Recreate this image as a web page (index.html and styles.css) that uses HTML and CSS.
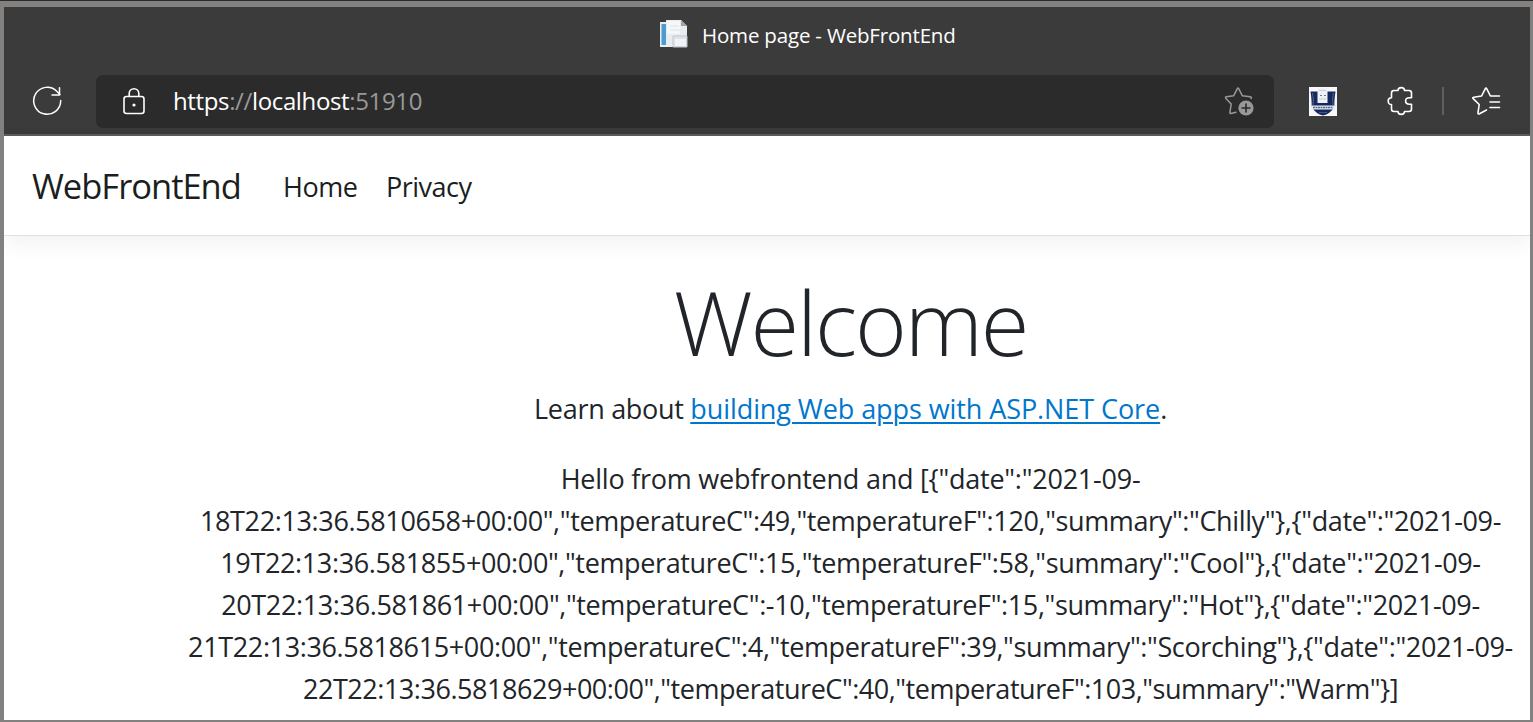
FILE: index.html
```
<!DOCTYPE html>
<html lang="en">
<head>
<meta charset="utf-8">
<title>Home page - WebFrontEnd</title>
<link rel="stylesheet" href="styles.css">
</head>
<body>
<div class="window">
  <div class="chrome">
    <div class="titlebar">
      <svg class="favicon" width="28" height="28" viewBox="0 0 28 28">
        <path d="M0 2H8V27H0z" fill="#e8edf2"/><path d="M1.5 4H6V25H1.5z" fill="#4e9bd0"/>
        <path d="M6 0H21L27 6V27H6z" fill="#e9edf0"/><path d="M7 1H20V14H7z" fill="#f5f7f8"/>
        <path d="M21 0V6H27z" fill="#9ca3a8"/><path d="M10 6H19M10 10H22" stroke="#dfe4e8"/>
        <path d="M13 16H27V27H13z" fill="#dfe5eb" stroke="#bfc7ce"/><path d="M15 19H26V26H15z" fill="#f1f4f7"/>
      </svg>
      <span class="tab-title">Home page - WebFrontEnd</span>
    </div>
    <div class="toolbar">
      <svg class="reload" width="32" height="32" viewBox="0 0 32 32" fill="none" stroke="#fff" stroke-width="1.500" stroke-linecap="round" stroke-linejoin="round">
        <path d="M28.700 15.500A13.500 13.500 0 1 1 25 6.500L28 9.500M27.500 2.700V10H20"/>
      </svg>
      <div class="address">
        <svg class="lock" width="24" height="30" viewBox="0 0 24 30" fill="none" stroke="#fff" stroke-width="1.600">
          <rect x="2" y="10.500" width="20" height="17" rx="2.500"/><path d="M7.200 10V7.500a4.800 4.800 0 0 1 9.600 0V10"/><circle cx="12" cy="19" r="1.600" fill="#fff" stroke="none"/>
        </svg>
        <span class="url"><span class="strong">https</span>://<span class="strong">localhost</span>:51910</span>
        <svg class="add-star" width="31" height="31" viewBox="0 0 31 31" fill="none" stroke="#999" stroke-width="1.500" stroke-linejoin="round" stroke-linecap="round">
          <path d="M12 27.300L7 28.500Q5.700 28.800 5.900 27.300L7.200 19L1.700 13.200Q1 12 2.500 11.700L9.600 10.800L13.200 3.800Q14 2.400 14.800 3.800L18.400 10.800L26.200 11.800Q28.200 12.200 27 13.500"/>
          <circle cx="22" cy="23" r="7.600" fill="#999" stroke="none"/><path d="M22 19V27M18 23H26" stroke="#2b2b2b" stroke-width="1.600"/>
        </svg>
      </div>
      <svg class="shield" width="28" height="29" viewBox="0 0 28 29">
        <path d="M0 0H28V29H0z" fill="#f7f8fa"/><path d="M1.500 4.500H26.500Q25 14 25.500 20Q21 27 14 28.500Q7 27 2.500 20Q3 14 1.500 4.500z" fill="#15295c"/>
        <path d="M3.500 6Q5 12 4 18M24.500 6Q23 12 24 18" fill="none" stroke="#6c7fa6" stroke-width=".7"/>
        <path d="M8.500 1H18.500V16H8.500z" fill="#eef2f6"/><path d="M10 3.500H17M10 12H17" stroke="#c3d0dc"/><path d="M11 8.500H13M15 8.500H17" stroke="#777"/>
        <path d="M1 18.500H27L25.500 22.500H2.500z" fill="#e5e9f0"/><path d="M4 20.500H24" stroke="#5b698c" stroke-width="1.500" stroke-dasharray="2 .5"/>
        <path d="M10 25.500H18" stroke="#3d578a"/>
      </svg>
      <svg class="puzzle" width="28" height="30" viewBox="0 0 28 30" fill="none" stroke="#fff" stroke-width="1.600" stroke-linejoin="round">
        <path d="M7 4.500H11C11 .7 17.500 .7 17.500 4.500H22Q24.500 4.500 24.500 7V11.800H22.500C17.300 11.800 17.300 18.200 22.500 18.200H24.500V23Q24.500 25.500 22 25.500H17.500C17.500 29.300 11 29.300 11 25.500H7Q4.500 25.500 4.500 23V18.500C.1 18.500 .1 11.800 4.500 11.800V7Q4.500 4.500 7 4.500z"/>
      </svg>
      <span class="divider"></span>
      <svg class="favorites" width="30" height="30" viewBox="0 0 30 30" fill="none" stroke="#fff" stroke-width="1.600" stroke-linejoin="round" stroke-linecap="round">
        <path d="M15.500 24L8.500 27.800Q6.700 28.600 7 26.700L8.200 18.500L2.200 12.700Q1 11.500 2.700 11.200L10.600 10L14.200 2.800Q15 1.400 15.800 2.800L19.400 10H28.500M19 16H28.500M19 21.500H28.500"/>
      </svg>
    </div>
  </div>
  <header class="navbar">
    <span class="brand">WebFrontEnd</span>
    <span class="nav-link home">Home</span>
    <span class="nav-link privacy">Privacy</span>
  </header>
  <main class="content">
    <h1 class="welcome">Welcome</h1>
    <p class="learn">Learn about <a class="link">building Web apps with ASP.NET Core</a>.</p>
    <div class="message">
      <div class="line l1">Hello from webfrontend and [{"date":"2021-09-</div>
      <div class="line l2">18T22:13:36.5810658+00:00","temperatureC":49,"temperatureF":120,"summary":"Chilly"},{"date":"2021-09-</div>
      <div class="line l3">19T22:13:36.581855+00:00","temperatureC":15,"temperatureF":58,"summary":"Cool"},{"date":"2021-09-</div>
      <div class="line l4">20T22:13:36.581861+00:00","temperatureC":-10,"temperatureF":15,"summary":"Hot"},{"date":"2021-09-</div>
      <div class="line l5">21T22:13:36.5818615+00:00","temperatureC":4,"temperatureF":39,"summary":"Scorching"},{"date":"2021-09-</div>
      <div class="line l6">22T22:13:36.5818629+00:00","temperatureC":40,"temperatureF":103,"summary":"Warm"}]</div>
    </div>
  </main>
</div>
</body>
</html>
```
FILE: styles.css
```
* { box-sizing: border-box; }
body { margin: 0; background: #2c2a2b; font-family: "Open Sans", "Noto Sans", sans-serif; color: #212529; overflow: hidden; }
svg { display: block; flex: none; }
.window { height: 721px; margin-top: 1px; border: solid #828180; border-width: 6px 3px 2px 4px; background: #fff; white-space: nowrap; overflow: hidden; }
.chrome { height: 129px; background: #3b3b3b; border-bottom: 2px solid #5c5c5c; color: #fff; }
.titlebar { height: 68px; padding: 0 0 14px 656px; display: flex; align-items: center; }
.tab-title { margin-left: 14px; padding-top: 2px; font-size: 20.500px; letter-spacing: -0.180px; }
.toolbar { height: 53px; display: flex; align-items: center; padding-left: 28px; }
.reload { margin-bottom: 2px; }
.address { width: 1178px; height: 53px; margin-left: 32px; border-radius: 7px; background: #2b2b2b; display: flex; align-items: center; padding: 0 0 2px 26px; }
.url { width: 251px; margin-left: 27px; color: #999; font-size: 24px; letter-spacing: -0.360px; }
.strong { color: #fff; }
.add-star { margin-left: 800px; }
.shield { margin-left: 35px; }
.puzzle { margin: 0 0 2px 50px; }
.divider { width: 2px; height: 28px; margin: 0 0 2px 27px; background: #5f5f5f; }
.favorites { margin: 0 0 2px 27px; }
.navbar { height: 100px; padding-left: 28px; display: flex; align-items: center; border-bottom: 1px solid #dee2e6; box-shadow: 0 7px 21px rgba(0, 0, 0, .06); color: #1b1e21; }
.brand { width: 251px; font-size: 34.500px; letter-spacing: -1px; }
.nav-link { width: 103px; padding-top: 1px; font-size: 27px; letter-spacing: -0.500px; }
.content { padding: 32px 0 0 167px; text-align: center; font-size: 27px; line-height: 42px; }
.welcome { margin: 0 0 12px; font-size: 88.500px; line-height: 108px; font-weight: 300; letter-spacing: -2.100px; }
.learn { margin: 0 0 28px; letter-spacing: -0.300px; }
.link { color: #0077cc; letter-spacing: -0.080px; text-decoration: underline; text-decoration-thickness: 2px; text-underline-offset: 3px; }
.line { letter-spacing: -0.370px; }
.l1 { letter-spacing: -0.240px; }
.l6 { letter-spacing: -0.460px; }
```
